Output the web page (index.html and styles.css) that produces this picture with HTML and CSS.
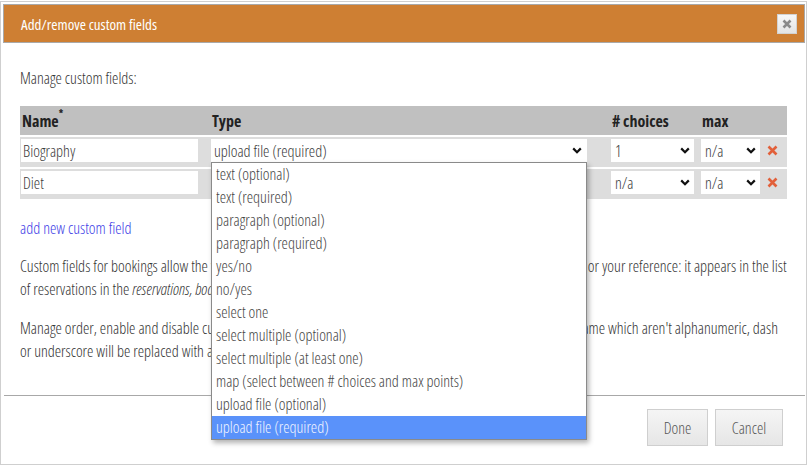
FILE: index.html
```html
<!DOCTYPE html>
<html>
<head>
<meta charset="utf-8">
<link rel="stylesheet" href="styles.css">
</head>
<body>
<div class="dialog">
  <div class="titlebar">
    <span class="title">Add/remove custom fields</span>
    <span class="close"><svg width="10" height="10" viewBox="0 0 10 10"><path d="M1.5 1.5 L8.5 8.5 M8.5 1.5 L1.5 8.5" stroke="#8a8a8a" stroke-width="2.6" stroke-linecap="butt"/></svg></span>
  </div>
  <div class="content">
    <p class="intro">Manage custom fields:</p>
    <div class="fields">
      <div class="row head">
        <div class="cell">Name<sup>*</sup></div>
        <div class="cell">Type</div>
        <div class="cell"># choices</div>
        <div class="cell">max</div>
        <div class="cell"></div>
      </div>
      <div class="row">
        <div class="cell"><div class="input name">Biography</div></div>
        <div class="cell">
          <div class="selectwrap">
            <div class="select type">upload file (required)<svg class="chev" width="10" height="7" viewBox="0 0 10 7"><path d="M1.2 1.4 L5 5.2 L8.8 1.4" fill="none" stroke="#111" stroke-width="2.2"/></svg></div>
            <ul class="dropdown">
              <li>text (optional)</li>
              <li>text (required)</li>
              <li>paragraph (optional)</li>
              <li>paragraph (required)</li>
              <li>yes/no</li>
              <li>no/yes</li>
              <li>select one</li>
              <li>select multiple (optional)</li>
              <li>select multiple (at least one)</li>
              <li>map (select between # choices and max points)</li>
              <li>upload file (optional)</li>
              <li class="active">upload file (required)</li>
            </ul>
          </div>
        </div>
        <div class="cell"><div class="select choices">1<svg class="chev" width="10" height="7" viewBox="0 0 10 7"><path d="M1.2 1.4 L5 5.2 L8.8 1.4" fill="none" stroke="#111" stroke-width="2.2"/></svg></div></div>
        <div class="cell"><div class="select max">n/a<svg class="chev" width="10" height="7" viewBox="0 0 10 7"><path d="M1.2 1.4 L5 5.2 L8.8 1.4" fill="none" stroke="#111" stroke-width="2.2"/></svg></div></div>
        <div class="cell"><svg class="remove" width="11" height="11" viewBox="0 0 11 11"><path d="M1.5 1.5 L9.5 9.5 M9.5 1.5 L1.5 9.5" stroke="#e2603a" stroke-width="2.6"/></svg></div>
      </div>
      <div class="row">
        <div class="cell"><div class="input name">Diet</div></div>
        <div class="cell"><div class="select type">text (optional)<svg class="chev" width="10" height="7" viewBox="0 0 10 7"><path d="M1.2 1.4 L5 5.2 L8.8 1.4" fill="none" stroke="#111" stroke-width="2.2"/></svg></div></div>
        <div class="cell"><div class="select choices">n/a<svg class="chev" width="10" height="7" viewBox="0 0 10 7"><path d="M1.2 1.4 L5 5.2 L8.8 1.4" fill="none" stroke="#111" stroke-width="2.2"/></svg></div></div>
        <div class="cell"><div class="select max">n/a<svg class="chev" width="10" height="7" viewBox="0 0 10 7"><path d="M1.2 1.4 L5 5.2 L8.8 1.4" fill="none" stroke="#111" stroke-width="2.2"/></svg></div></div>
        <div class="cell"><svg class="remove" width="11" height="11" viewBox="0 0 11 11"><path d="M1.5 1.5 L9.5 9.5 M9.5 1.5 L1.5 9.5" stroke="#e2603a" stroke-width="2.6"/></svg></div>
      </div>
    </div>
    <p class="addlink"><a href="#">add new custom field</a></p>
    <p class="text">Custom fields for bookings allow the visitors to enter any additional information, which will be shown to you f or your reference: it appears in the list<br>of reservations in the <em>reservations, bookings</em> and <em>export</em> pages of the administration panel.</p>
    <p class="text">Manage order, enable and disable custom fields by dragging them around in the list; characters in the field name which aren't alphanumeric, dash<br>or underscore will be replaced with an underscore.</p>
  </div>
  <div class="footer">
    <button class="btn">Done</button>
    <button class="btn">Cancel</button>
  </div>
</div>
</body>
</html>
```

FILE: styles.css
```css
html, body {
  margin: 0;
  padding: 0;
  background: #fff;
}
body {
  font-family: "Open Sans", "Liberation Sans Narrow", "DejaVu Sans Condensed", sans-serif;
  font-stretch: 75%;
  font-weight: 300;
  font-size: 16px;
  color: #333;
}
.dialog {
  box-sizing: border-box;
  width: 807px;
  height: 464px;
  margin-top: 1px;
  border: 1px solid #cfcfcf;
  padding: 2px 1px 0 2px;
  display: flex;
  flex-direction: column;
}
.titlebar {
  box-sizing: border-box;
  height: 39px;
  background: #ce7f33;
  border: 1px solid #a9a9a9;
  display: flex;
  align-items: center;
  justify-content: space-between;
  padding: 0 7px 0 17px;
}
.title {
  color: #fff;
  font-size: 15px;
  font-weight: 400;
}
.close {
  box-sizing: border-box;
  width: 20px;
  height: 20px;
  border: 1px solid #d2d2d2;
  background: linear-gradient(#f7f7f7, #e4e4e4);
  display: flex;
  align-items: center;
  justify-content: center;
}
.content {
  padding: 0 17px;
  flex: 1;
}
.intro {
  margin: 24px 0 0 0;
  line-height: 23px;
}
.fields {
  margin-top: 16px;
  width: 767px;
  display: flex;
  flex-direction: column;
  gap: 2px;
}
.row {
  display: grid;
  grid-template-columns: 190px 400px 90px 65px 1fr;
  align-items: start;
  background: #dddddd;
  height: 30px;
  box-sizing: border-box;
  padding: 2px 0 0 1px;
}
.row.head {
  background: #c0c0c0;
  height: 29px;
  padding: 0 0 0 1px;
  align-items: center;
  font-weight: 700;
  font-size: 16px;
  color: #222;
}
.row.head .cell {
  padding-left: 1px;
}
.row.head sup {
  font-size: 10px;
  line-height: 0;
  position: relative;
  top: -1px;
  align-self: flex-start;
  margin-top: 8px;
}
.cell {
  display: flex;
  align-items: center;
  height: 100%;
}
.row:not(.head) .cell {
  height: 23px;
}
.selectwrap {
  position: relative;
}
.input, .select {
  box-sizing: border-box;
  height: 23px;
  background: #fff;
  color: #3a3a3a;
  display: flex;
  align-items: center;
  padding-left: 2px;
}
.input.name {
  width: 177px;
}
.select {
  justify-content: space-between;
  padding-right: 5px;
}
.select.type {
  width: 376px;
  padding-left: 3px;
}
.select.choices {
  width: 83px;
  padding-left: 4px;
  padding-right: 4px;
}
.select.max {
  width: 59px;
  padding-left: 4px;
  padding-right: 4px;
}
.remove {
  margin-left: 1px;
}
.dropdown {
  position: absolute;
  left: 0;
  top: 100%;
  z-index: 5;
  box-sizing: border-box;
  width: 376px;
  margin: 0;
  padding: 0;
  list-style: none;
  background: #fff;
  border: 1px solid #8a8a8a;
  box-shadow: 2px 3px 5px rgba(0, 0, 0, 0.3);
  color: #444;
}
.dropdown li {
  height: 23px;
  line-height: 23px;
  padding-left: 4px;
  white-space: nowrap;
}
.dropdown li.active {
  background: #5a92fa;
  color: #f2f5ff;
}
.addlink {
  margin: 18px 0 0 0;
  line-height: 23px;
}
.addlink a {
  color: #3c3ce6;
  text-decoration: none;
}
.text {
  margin: 16px 0 0 0;
  line-height: 23px;
  white-space: nowrap;
}
.addlink + .text {
  margin-top: 15px;
}
.footer {
  box-sizing: border-box;
  height: 69px;
  border-top: 1px solid #a8a8a8;
  display: flex;
  justify-content: flex-end;
  align-items: flex-start;
  gap: 7px;
  padding: 13px 22px 0 0;
  margin-left: 1px;
}
.btn {
  box-sizing: border-box;
  width: 61px;
  height: 37px;
  border: 1px solid #cfcfcf;
  background: linear-gradient(#f5f5f5, #e6e6e6);
  font-family: inherit;
  font-stretch: 75%;
  font-weight: 300;
  font-size: 16px;
  color: #555;
  padding: 0;
  border-radius: 0;
}
.btn + .btn {
  width: 68px;
}
```
